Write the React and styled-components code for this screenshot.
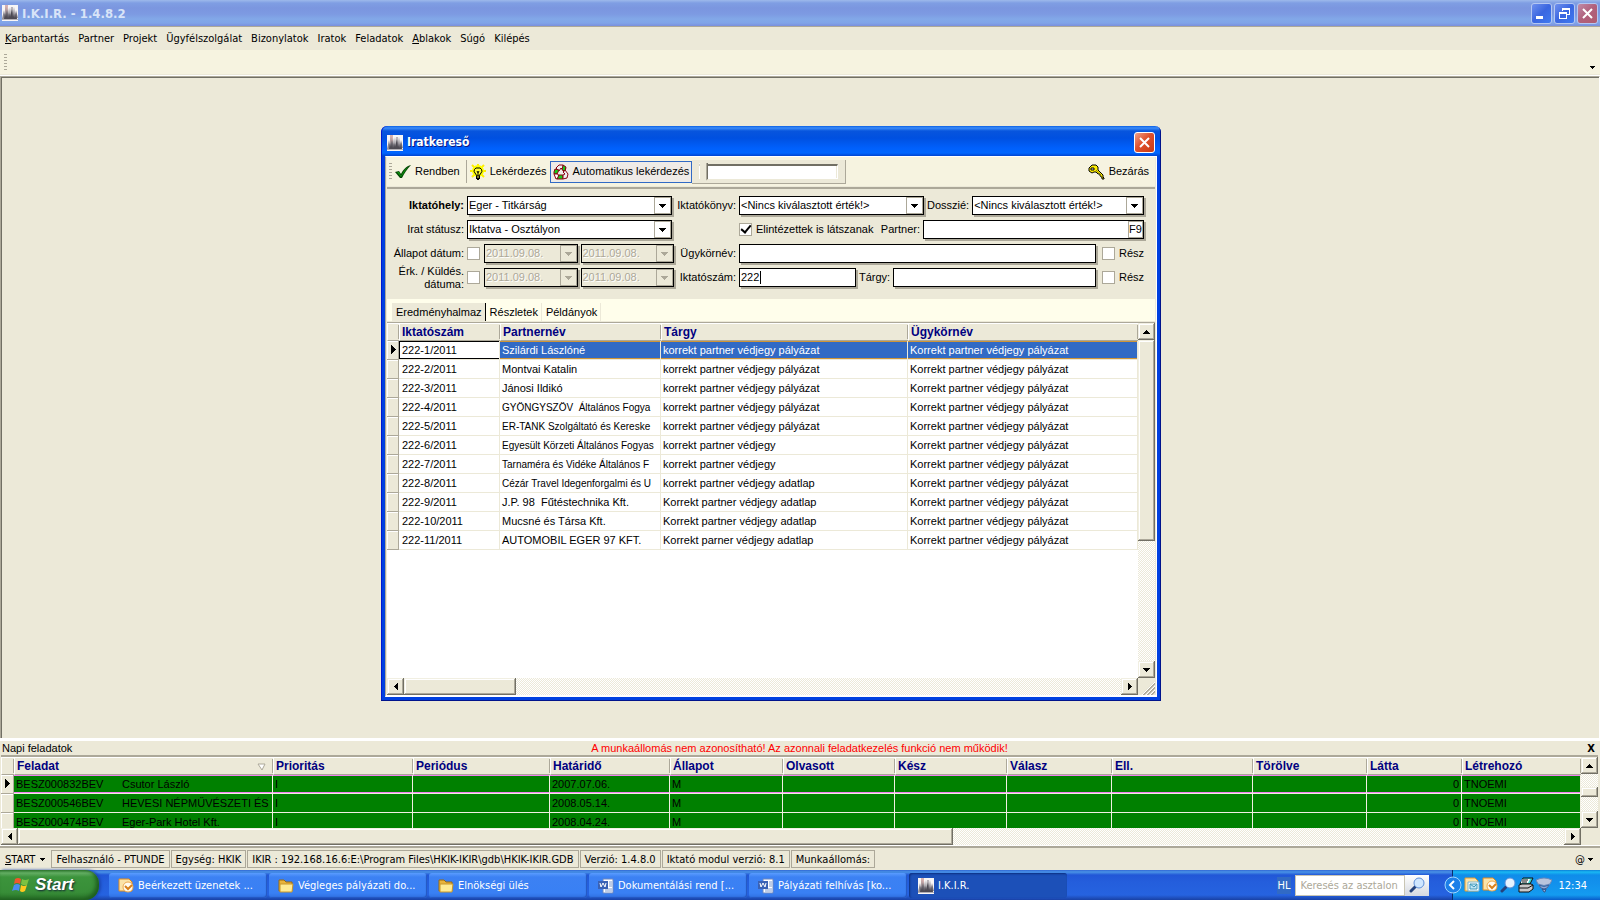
import React, { useState } from 'react';
import styled, { createGlobalStyle, css } from 'styled-components';

// Global Styles
const GlobalStyle = createGlobalStyle`
  * {
    box-sizing: border-box;
  }

  body {
    margin: 0;
    background: #ece9d8;
    color: #000;
    font-family: 'Liberation Sans', Arial, sans-serif;
    font-size: 11px;
    line-height: 13px;
    overflow: hidden;
  }

  button, input, select {
    font: inherit;
    color: inherit;
    margin: 0;
    padding: 0;
    border: none;
    border-radius: 0;
    background: none;
    outline: none;
  }
`;

const tahoma = css`
  font-family: 'DejaVu Sans Condensed', 'DejaVu Sans', sans-serif;
`;

const bevel = css`
  background: #ece9d8;
  box-shadow: inset -1px -1px #716f64, inset 1px 1px #f1efe2, inset -2px -2px #aca899, inset 2px 2px #fff;
`;

const Screen = styled.div`
  display: flex;
  flex-direction: column;
  height: 100vh;
`;

// Title bars
const TitleBar = styled.header`
  display: flex;
  align-items: center;
  gap: 4px;
  height: 26px;
  padding: 0 2px;
  flex: none;
  background: linear-gradient(#9db9eb 0, #7f9ee3 3px, #7b96df 8px, #7d9ae2 14px, #82a8e8 19px, #80a4e8 23px, #7a8fdd 26px);
`;

const MainTitle = styled.h1`
  ${tahoma}
  flex: 1;
  margin: 0;
  font-size: 13px;
  font-weight: bold;
  color: #d8e4f8;
`;

const WindowButton = styled.button`
  display: flex;
  width: 21px;
  height: 21px;
  align-items: center;
  justify-content: center;
  border: 1px solid ${(p) => (p.$dim ? '#b4c7f2' : '#fff')};
  border-radius: 3px;
  background: ${(p) => p.$fill};
`;

const CaptionButtons = styled.div`
  display: flex;
  gap: 2px;
`;

// Main menu
const MenuBar = styled.nav`
  ${tahoma}
  display: flex;
  align-items: center;
  gap: 9px;
  height: 24px;
  padding: 0 5px;
  flex: none;
  border-top: 1px solid #aca899;
`;

const MenuItem = styled.a`
  color: #000;
  text-decoration: none;
`;

const EmptyToolbar = styled.div`
  display: flex;
  align-items: center;
  justify-content: space-between;
  height: 26px;
  padding: 0 5px 0 4px;
  flex: none;
  background: #f6f3e0;
  border-bottom: 2px solid #ece9d8;
`;

const Grip = styled.span`
  width: 3px;
  height: 17px;
  background: repeating-linear-gradient(#aca899 0 1px, transparent 1px 3px);
`;

const ToolbarMore = styled.button`
  display: flex;
  align-self: flex-end;
  padding-bottom: 5px;
`;

const Workspace = styled.main`
  position: relative;
  flex: 1;
  border-top: 1px solid #aca899;
  border-left: 1px solid #aca899;
  border-right: 1px solid #fff;
  box-shadow: inset 1px 1px #716f64, 0 -1px #fff;
`;

// Search window
const Dialog = styled.section`
  position: absolute;
  left: 380px;
  top: 49px;
  display: flex;
  flex-direction: column;
  width: 780px;
  height: 575px;
  padding: 0 4px 4px;
  border-radius: 6px 6px 0 0;
  background: linear-gradient(#0a5fe6 0, #3c8cf8 2px, #0855dd 5px, #0050e0 12px, #0060fc 22px, #0066ff 27px, #0044d0 30px, #0040e0 31px);
  box-shadow: inset -1px -1px #00138c, inset 1px 0 #0019cf;
`;

const DialogTitle = styled.div`
  display: flex;
  align-items: center;
  gap: 4px;
  height: 30px;
  padding: 3px 2px 0;
  flex: none;
`;

const DialogName = styled.h2`
  ${tahoma}
  flex: 1;
  margin: 0;
  font-size: 12px;
  line-height: 15px;
  color: #fff;
  text-shadow: 1px 1px #0a1883;
`;

const DialogBody = styled.div`
  display: flex;
  flex-direction: column;
  flex: 1;
  min-height: 0;
  padding: 0 1px;
  background: #ece9d8;
  border: solid #fff;
  border-width: 1px 1px 2px;
  border-left-color: #aca899;
`;

const Toolbar = styled.div`
  display: flex;
  align-items: center;
  height: 29px;
  padding: 0 3px 0 2px;
  flex: none;
  background: #f6f3e0;
`;

const ToolButton = styled.button`
  display: flex;
  align-items: center;
  gap: 4px;
  height: 22px;
  padding: 0 2px;
  white-space: nowrap;
  border: 1px solid ${(p) => (p.$pressed ? '#316ac5' : 'transparent')};
  background: ${(p) => (p.$pressed ? '#efebe7' : 'none')};
`;

const Separator = styled.span`
  width: 1px;
  height: 23px;
  margin: 0 0 0 3px;
  background: #aca899;
`;

const SliderBox = styled.div`
  display: flex;
  align-items: center;
  height: 24px;
  padding: 0 7px;
  background: #ece9d8;
  border-right: 1px solid #aca899;
  border-bottom: 1px solid #aca899;
`;

const Slider = styled.input`
  appearance: none;
  width: 139px;
  height: 20px;

  &::-webkit-slider-runnable-track {
    height: 15px;
    background: #fff;
    border: 1px solid #fff;
    border-top: 2px solid #716f64;
    border-left: none;
    box-shadow: inset -1px 0 #ece9d8;
  }

  &::-webkit-slider-thumb {
    appearance: none;
    width: 9px;
    height: 20px;
    margin-top: -3px;
    background: linear-gradient(90deg, #fff 1px, #ece9d8 1px 7px, #aca899 7px 8px, #716f64 8px);
    clip-path: polygon(0 0, 100% 0, 100% 80%, 50% 100%, 0 80%);
  }
`;

const Spacer = styled.span`
  flex: 1;
`;

// Filter form
const FilterForm = styled.form`
  display: grid;
  grid-template-columns: 77px 207px 59px minmax(0, 1fr);
  grid-auto-rows: 19px;
  gap: 5px 3px;
  align-items: center;
  padding: 7px 11px 12px 0;
  flex: none;
  border-top: 2px solid #aca899;
  margin-top: 1px;
`;

const FieldLabel = styled.label`
  text-align: right;
  white-space: nowrap;
  font-weight: ${(p) => (p.$strong ? 'bold' : 'normal')};
`;

const TwoLineLabel = styled(FieldLabel)`
  white-space: normal;
`;

const FieldRow = styled.div`
  display: flex;
  align-items: center;
  gap: 3px;
`;

const Box = styled.span`
  position: relative;
  display: flex;
  flex: ${(p) => (p.$width ? 'none' : '1')};
  width: ${(p) => p.$width || 'auto'};
  min-width: 0;
  height: 19px;
  border: 1px solid #000;
  background: ${(p) => (p.$disabled ? '#ece9d8' : '#fff')};
  box-shadow: 2px 2px #aca899;
`;

const SelectInput = styled.select`
  appearance: none;
  flex: 1;
  min-width: 0;
  padding: 0 17px 1px 1px;
`;

const TextInput = styled.input`
  flex: 1;
  min-width: 0;
  padding: 0 1px 1px;

  &:disabled {
    color: #aca899;
    text-shadow: 1px 1px #fff;
  }
`;

const DropMark = styled.span`
  position: absolute;
  right: 0;
  top: 0;
  display: flex;
  align-items: center;
  justify-content: center;
  width: 17px;
  height: 17px;
  border: 1px solid #aca899;
  pointer-events: none;
`;

const KeyButton = styled.button`
  width: 15px;
  border: 1px solid #aca899;
`;

const Caret = styled.span`
  position: absolute;
  left: 20px;
  top: 2px;
  width: 1px;
  height: 13px;
  background: #000;
`;

const CheckWrap = styled.label`
  display: flex;
  align-items: center;
  gap: 3px;
  white-space: nowrap;
  margin-left: ${(p) => (p.$apart ? '3px' : '0')};
`;

const Check = styled.input`
  appearance: none;
  display: grid;
  place-items: center;
  width: 13px;
  height: 13px;
  margin: 0 1px 0 0;
  flex: none;
  background: #fff;
  border: 1px solid #aca899;

  &:checked::after {
    content: '';
    width: 4px;
    height: 8px;
    margin-top: -3px;
    border: solid #000;
    border-width: 0 2px 2px 0;
    transform: rotate(40deg);
  }
`;

// Tabs
const TabStrip = styled.div`
  display: flex;
  align-items: flex-end;
  height: 23px;
  padding: 0 5px;
  flex: none;
  background: #fffeeb;
  border-bottom: 1px solid #ece9d8;
`;

const Tab = styled.button`
  height: 18px;
  padding: 0 3px 0 4px;
  border-right: 1px solid ${(p) => (p.$active ? '#000' : '#ece9d8')};
  background: ${(p) => (p.$active ? '#ece9d8' : 'none')};
`;

// Data grids
const GridArea = styled.div`
  display: grid;
  grid-template-columns: 1fr 17px;
  grid-template-rows: ${(p) => p.$rows} 17px;
  flex: ${(p) => (p.$grow ? '1' : 'none')};
  min-height: 0;
  border-top: ${(p) => p.$line} solid #aca899;
`;

const GridView = styled.div`
  overflow: hidden;
  background: #fff;
`;

const Table = styled.table`
  width: 100%;
  table-layout: fixed;
  border-collapse: separate;
  border-spacing: 0;
`;

const Th = styled.th`
  height: 18px;
  padding: 1px 2px 0;
  text-align: left;
  font-size: 12px;
  color: #000080;
  white-space: nowrap;
  background: linear-gradient(#aca899, #aca899) right center / 1px 14px no-repeat, #ece9d8;
  border-bottom: 1px solid #aca899;
  border-top: 1px solid #fff;
  border-left: 1px solid #fff;
`;

const SortMark = styled.span`
  float: right;
  display: flex;
  padding: 3px 5px 0 0;
`;

const Indicator = styled.th`
  height: 19px;
  padding: 0 0 0 2px;
  background: #ece9d8;
  border: 1px solid #aca899;
  border-width: 0 1px 1px 0;
  box-shadow: inset 1px 1px #fff;
  line-height: 0;
`;

const Td = styled.td`
  height: 19px;
  padding: 0 0 0 2px;
  overflow: hidden;
  white-space: pre;
  font-size: ${(p) => (p.$long ? '10px' : '11px')};
  background: #fff;
  border: 1px solid #ece9d8;
  border-width: 0 1px 1px 0;

  tr[aria-selected='true'] > & {
    color: #fff;
    background: #316ac5;
    box-shadow: inset 0 1px #ce9539, inset 0 -1px #ce9539;
  }

  tr > &:nth-child(2) {
    padding-left: 3px;
  }

  tr[aria-selected='true'] > &:nth-child(2) {
    color: #000;
    background: #fff;
    box-shadow: inset 0 1px #000, inset 0 -1px #000, inset 1px 0 #000;
  }
`;

const TaskTd = styled.td`
  height: 19px;
  padding: 0 2px;
  overflow: hidden;
  white-space: pre;
  text-align: ${(p) => (p.$right ? 'right' : 'left')};
  background: #008000;
  border: 1px solid #f1efe2;
  border-width: 0 1px 1px 0;

  tr[aria-selected='true'] > & {
    box-shadow: inset 0 1px #f080f0, inset 0 -1px #f080f0;
  }
`;

const TaskCode = styled.span`
  display: inline-block;
  width: 106px;
`;

// Scroll bars
const Track = styled.div`
  display: flex;
  flex-direction: ${(p) => (p.$vertical ? 'column' : 'row')};
  background: conic-gradient(#fff 25%, #ece9d8 0 50%, #fff 0 75%, #ece9d8 0) 0 0 / 2px 2px;
`;

const ScrollButton = styled.button`
  ${bevel}
  display: flex;
  align-items: center;
  justify-content: center;
  width: 17px;
  height: 17px;
  flex: none;
`;

const Thumb = styled.div`
  ${bevel}
  flex: 0 0 ${(p) => p.$size};
  margin-top: ${(p) => p.$offset || '0'};
`;

const Corner = styled.div`
  display: flex;
  align-items: flex-end;
  justify-content: flex-end;
`;

// Daily tasks panel
const TaskPanel = styled.section`
  flex: none;
  padding: 0 2px 0 1px;
  border-top: 3px solid #fff;
  border-bottom: 1px solid #fff;
`;

const TaskCaption = styled.div`
  display: grid;
  grid-template-columns: 100px 1fr 100px;
  align-items: center;
  height: 14px;
  padding: 0 1px;
`;

const Warning = styled.span`
  text-align: center;
  color: #f00;
`;

const ClosePanel = styled.button`
  ${tahoma}
  justify-self: end;
  padding: 0 2px;
  font-weight: bold;
`;

// Status bar
const StatusBar = styled.footer`
  ${tahoma}
  display: flex;
  align-items: center;
  height: 24px;
  padding: 0 4px 0 5px;
  flex: none;
  border-top: 2px solid #aca899;
`;

const StatusMenu = styled.button`
  display: flex;
  align-items: center;
  gap: 5px;
  margin-right: 6px;
`;

const StatusCell = styled.span`
  padding: 2px 4px;
  height: 18px;
  margin-right: 1px;
  white-space: nowrap;
  border: 1px solid #aca899;
`;

// Taskbar
const Taskbar = styled.div`
  ${tahoma}
  display: flex;
  align-items: stretch;
  height: 30px;
  flex: none;
  color: #fff;
  background: linear-gradient(#3168d5 0, #4993e6 2px, #2157d7 5px, #245edc 12px, #2663e0 25px, #1941a5 30px);
`;

const StartButton = styled.button`
  display: flex;
  align-items: center;
  gap: 5px;
  width: 99px;
  padding: 0 0 1px 12px;
  margin-right: 10px;
  border-radius: 0 14px 14px 0;
  font: italic bold 17px 'Liberation Sans', Arial, sans-serif;
  text-shadow: 1px 1px 2px #123;
  background: linear-gradient(#2f7a2f 0, #63ad63 3px, #3c943c 7px, #388e38 22px, #2c7a2c 30px);
  box-shadow: inset -3px -2px 4px #1d5c1d, 2px 0 3px #1a45b0;
`;

const TaskButtons = styled.div`
  display: flex;
  gap: 2px;
  flex: 1;
`;

const TaskButton = styled.button`
  display: flex;
  align-items: center;
  gap: 4px;
  width: 158px;
  height: 25px;
  margin-top: 3px;
  padding-left: 9px;
  white-space: nowrap;
  border-radius: 3px;
  background: ${(p) => (p.$active ? '#1c50b8' : 'linear-gradient(#5a9cff 0, #3c81f3 4px, #3980f4 20px, #2f6fe0 25px)')};
  box-shadow: ${(p) => (p.$active ? 'inset 1px 1px 2px #0c2f80' : 'inset -1px -1px 1px #2456c0')};
`;

const Language = styled.span`
  align-self: center;
  padding: 2px 1px;
  margin-right: 4px;
  background: #316ac5;
`;

const DeskSearch = styled.form`
  display: flex;
  align-items: center;
  margin-right: 23px;
`;

const SearchInput = styled.input`
  width: 110px;
  height: 21px;
  padding: 0 4px;
  background: #fff;
  border: 1px solid #c9c5b4;

  &::placeholder {
    color: #aca899;
    opacity: 1;
  }
`;

const SearchButton = styled.button`
  display: flex;
  align-items: center;
  justify-content: center;
  width: 24px;
  height: 21px;
  background: linear-gradient(#fff, #d4d8e0);
`;

const Tray = styled.div`
  display: flex;
  align-items: center;
  gap: 2px;
  padding: 0 13px 0 11px;
  background: linear-gradient(#0c7ed8 0, #19b9f3 2px, #0f8dea 5px, #1290ec 12px, #149bf0 25px, #095bc9 30px);
  border-left: 1px solid #092e6c;
`;

const TrayToggle = styled.button`
  display: flex;
  margin-left: -20px;
`;

const Clock = styled.time`
  margin-left: 4px;
`;

// Icons
const triangles = {
  up: 'M3 0h1v1h1v1h1v1h1v1H0V3h1V2h1V1h1z',
  down: 'M0 0h7v1H6v1H5v1H4v1H3V3H2V2H1V1H0z',
  left: 'M4 0v7H3V6H2V5H1V4H0V3h1V2h1V1h1V0z',
  right: 'M0 0v7h1V6h1V5h1V4h1V3H3V2H2V1H1V0z',
};

const Triangle = ({ dir = 'down', color = '#000' }) => {
  const wide = dir === 'up' || dir === 'down';
  return (
    <svg width={wide ? 7 : 4} height={wide ? 4 : 7} shapeRendering="crispEdges" aria-hidden="true">
      <path d={triangles[dir]} fill={color} />
    </svg>
  );
};

const SmallArrow = () => (
  <svg width="5" height="3" shapeRendering="crispEdges" aria-hidden="true">
    <path d="M0 0h5v1H4v1H3v1H2V2H1V1H0z" />
  </svg>
);

const RowPointer = () => (
  <svg width="6" height="10" shapeRendering="crispEdges" aria-hidden="true">
    <path d="M0 0h1v1h1v1h1v1h1v1h1v1h-1v1h-1v1h-1v1h-1v1H0z" />
  </svg>
);

const AppIcon = () => (
  <svg width="16" height="16" viewBox="0 0 16 16" aria-hidden="true">
    <rect width="16" height="16" fill="#f8f6f6" />
    <path d="M3 0h3v10H3z" fill="#d9b2b0" />
    <path d="M9 2h2v8H9z" fill="#b9b4ba" />
    <path d="M0 14L2 5l1 5 1-9 1 8 1-6 1 7 1-8 1 9 1-6 1 4 1-7 1 8 1-5 2 8z" fill="#8a868e" />
    <path d="M2 14L3 8l1 4 1-7 1 8 1-5 1 4 2-8 1 8 1-3 1 4 1-6 1 7z" fill="#4d4a53" />
    <path d="M0 14h16v1H0z" fill="#b3b0b5" />
  </svg>
);

const CheckIcon = () => (
  <svg width="16" height="16" viewBox="0 0 16 16" aria-hidden="true">
    <path d="M0 8l4-1 2 3c2-4 5-8 10-9-4 4-7 9-9 13H5z" fill="#064806" />
    <path d="M2 8h2l2 4c2-4 4-7 7-9-3 4-5 7-7 10z" fill="#0f9a0f" />
  </svg>
);

const BulbIcon = () => (
  <svg width="16" height="16" viewBox="0 0 16 16" aria-hidden="true">
    <g stroke="#ffee00" strokeWidth="2">
      <path d="M8 0v3M0 7h4M12 7h4M2 1l3 3M14 1l-3 3M2 13l3-3M14 13l-3-3" />
    </g>
    <circle cx="8" cy="7" r="6" fill="#ffff00" />
    <path d="M8 4a3 3 0 0 0-3 5l2 3h2l2-3a3 3 0 0 0-3-5z" fill="#ffff30" stroke="#000" />
    <path d="M7 7l1 2 1-2M8 9v3" fill="none" stroke="#000" />
    <path d="M6 12h4v3H9v1H7v-1H6z" fill="#000" />
    <path d="M7 13h2" stroke="#ffff30" />
  </svg>
);

const RecycleIcon = () => (
  <svg width="16" height="16" viewBox="0 0 16 16" aria-hidden="true">
    <g stroke="#8b0010" strokeWidth="1">
      <path d="M3 4l3-3h4l3 4-3 1-2-2-2 3z" fill="#eee" />
      <path d="M2 5l4 1-2 4H1v-2z" fill="#19c819" />
      <path d="M1 10h4l1 4-3 1z" fill="#fff" />
      <path d="M6 11h4v4H4z" fill="#19c819" />
      <path d="M12 6l3 4-1 4-4 1v-4l2-1-2-2z" fill="#eee" />
      <path d="M10 1l3 2-1 4-3-1z" fill="#19c819" />
    </g>
  </svg>
);

const KeyIcon = () => (
  <svg width="17" height="16" viewBox="0 0 17 16" aria-hidden="true">
    <path
      d="M4 1h4l2 2v3l5 5v2l1 1v1h-2v-2h-1v-1h-1v-2h-2L8 8H6L4 9 1 7V4z"
      fill="#ffee00"
      stroke="#000"
      strokeLinejoin="round"
    />
    <path d="M3 4h3v2H3z" fill="#f6f3e0" stroke="#000" />
    <path d="M8 6l6 7" stroke="#8a8000" />
  </svg>
);

const CloseGlyph = () => (
  <svg width="11" height="11" viewBox="0 0 11 11" aria-hidden="true">
    <path d="M1 1l9 9M10 1l-9 9" stroke="#fff" strokeWidth="2" />
  </svg>
);

const FlagIcon = () => (
  <svg width="18" height="18" viewBox="0 0 18 18" aria-hidden="true">
    <path d="M3 3q3-2 6 0L8 8Q5 6 2 8z" fill="#f0562c" />
    <path d="M10 3q3 2 7 0l-2 6q-3 1-6-1z" fill="#7cc242" />
    <path d="M2 9q3-2 6 0l-1 6q-3-2-7 0z" fill="#4a8cf0" />
    <path d="M9 9q3 2 6 0l-2 6q-3 2-5 0z" fill="#ffc81e" />
  </svg>
);

const MailIcon = () => (
  <svg width="16" height="16" viewBox="0 0 16 16" aria-hidden="true">
    <path d="M1 1h10l3 3v9H1z" fill="#fbe3a8" stroke="#e08a1c" />
    <circle cx="10" cy="9" r="5" fill="#fffbf0" stroke="#eda94c" />
    <path d="M7 8l3 3 4-4" fill="none" stroke="#d8801c" strokeWidth="2" />
  </svg>
);

const FolderIcon = () => (
  <svg width="16" height="14" viewBox="0 0 16 14" aria-hidden="true">
    <path d="M1 3V1h5l2 2h6v9H1z" fill="#e8b33c" stroke="#9b6a10" />
    <path d="M2 5h13l-1 8H2z" fill="#ffeb94" stroke="#c8962a" />
  </svg>
);

const WordIcon = () => (
  <svg width="16" height="16" viewBox="0 0 16 16" aria-hidden="true">
    <path d="M5 1h10v14H5z" fill="#fff" stroke="#6a86c0" />
    <path d="M11 4h3M11 6h3M11 8h3M7 11h7M7 13h7" stroke="#7d9ad0" />
    <path d="M0 3h10v8H0z" fill="#3a62b4" />
    <path d="M2 5l1 4 2-4 2 4 1-4" fill="none" stroke="#fff" />
  </svg>
);

const Magnifier = ({ lens = '#cfe6ff' }) => (
  <svg width="16" height="16" viewBox="0 0 16 16" aria-hidden="true">
    <path d="M2 14l5-5" stroke="#24427c" strokeWidth="3" strokeLinecap="round" />
    <circle cx="10" cy="6" r="5" fill={lens} stroke="#5f8fd8" />
  </svg>
);

const MessageIcon = () => (
  <svg width="16" height="16" viewBox="0 0 16 16" aria-hidden="true">
    <path d="M1 1h10l3 3v10H1z" fill="#fbe3a8" stroke="#e39a2c" />
    <path d="M4 5h11v9H4z" fill="#fff" stroke="#7db8d0" />
    <path d="M6 7h7v5H6z" fill="#bfe6f6" stroke="#3f97b8" />
    <path d="M6 7l4 3 3-3" fill="none" stroke="#3f97b8" />
  </svg>
);

const PrinterIcon = () => (
  <svg width="16" height="16" viewBox="0 0 16 16" aria-hidden="true">
    <path d="M5 1h10l-3 6H2z" fill="#3fd8d0" stroke="#111" />
    <path d="M4 2h8l-2 4H3z" fill="#fff" />
    <path d="M1 8l3-1h9l2 1v4l-4 3H1z" fill="#c8c8c8" stroke="#111" />
    <path d="M1 11h9l5-3M4 3h6M4 5h5" fill="none" stroke="#111" />
  </svg>
);

const FunnelIcon = () => (
  <svg width="16" height="16" viewBox="0 0 16 16" aria-hidden="true">
    <path d="M0 3q8-4 16 0l-2 4q-6 3-12 0z" fill="#b8c4dc" stroke="#6888bc" />
    <path d="M3 8q5 3 10 0l-2 3q-3 2-6 0z" fill="#8fa8d4" stroke="#44649c" />
    <path d="M6 12q2 1 4 0l-1 3H8z" fill="#8fb0e0" stroke="#35568c" />
  </svg>
);

const ChevronBall = () => (
  <svg width="18" height="18" viewBox="0 0 18 18" aria-hidden="true">
    <circle cx="9" cy="9" r="8" fill="#1c7fe8" stroke="#9fd6ff" />
    <path d="M10 5L6 9l4 4" fill="none" stroke="#fff" strokeWidth="2" />
  </svg>
);

const SizeGrip = () => (
  <svg width="14" height="14" viewBox="0 0 14 14" aria-hidden="true">
    <path d="M2 14L14 2M6 14l8-8M10 14l4-4" stroke="#aca899" strokeWidth="2" />
    <path d="M1 14L14 1M5 14l9-9M9 14l5-5" stroke="#fff" />
  </svg>
);

const documents = [
  ['222-1/2011', 'Szilárdi Lászlóné', 'korrekt partner védjegy pályázat'],
  ['222-2/2011', 'Montvai Katalin', 'korrekt partner védjegy pályázat'],
  ['222-3/2011', 'Jánosi Ildikó', 'korrekt partner védjegy pályázat'],
  ['222-4/2011', 'GYÖNGYSZÖV  Általános Fogya', 'korrekt partner védjegy pályázat'],
  ['222-5/2011', 'ER-TANK Szolgáltató és Kereske', 'korrekt partner védjegy pályázat'],
  ['222-6/2011', 'Egyesült Körzeti Általános Fogyas', 'korrekt partner védjegy'],
  ['222-7/2011', 'Tarnaméra és Vidéke Általános F', 'korrekt partner védjegy'],
  ['222-8/2011', 'Cézár Travel Idegenforgalmi és U', 'korrekt partner védjegy adatlap'],
  ['222-9/2011', 'J.P. 98  Fűtéstechnika Kft.', 'Korrekt partner védjegy adatlap'],
  ['222-10/2011', 'Mucsné és Társa Kft.', 'Korrekt partner védjegy adatlap'],
  ['222-11/2011', 'AUTOMOBIL EGER 97 KFT.', 'Korrekt parner védjegy adatlap'],
];

const taskColumns = [
  ['Feladat', 259],
  ['Prioritás', 140],
  ['Periódus', 137],
  ['Határidő', 120],
  ['Állapot', 113],
  ['Olvasott', 112],
  ['Kész', 112],
  ['Válasz', 105],
  ['Ell.', 141],
  ['Törölve', 114],
  ['Látta', 95],
  ['Létrehozó'],
];

const tasks = [
  ['BESZ000832BEV', 'Csutor László', '2007.07.06.'],
  ['BESZ000546BEV', 'HEVESI NÉPMŰVÉSZETI ÉS', '2008.05.14.'],
  ['BESZ000474BEV', 'Eger-Park Hotel Kft.', '2008.04.24.'],
];

const Combo = ({ id, value, width }) => (
  <Box $width={width}>
    <SelectInput id={id} defaultValue={value}>
      <option>{value}</option>
    </SelectInput>
    <DropMark>
      <Triangle />
    </DropMark>
  </Box>
);

const DateField = ({ label }) => (
  <Box $disabled>
    <TextInput aria-label={label} defaultValue="2011.09.08." disabled />
    <DropMark>
      <Triangle color="#aca899" />
    </DropMark>
  </Box>
);

const VScroll = ({ size, offset }) => (
  <Track $vertical>
    <ScrollButton aria-label="Fel"><Triangle dir="up" /></ScrollButton>
    <Thumb $size={size} $offset={offset} />
    <Spacer />
    <ScrollButton aria-label="Le"><Triangle dir="down" /></ScrollButton>
  </Track>
);

const HScroll = ({ size }) => (
  <Track>
    <ScrollButton aria-label="Balra"><Triangle dir="left" /></ScrollButton>
    <Thumb $size={size} />
    <Spacer />
    <ScrollButton aria-label="Jobbra"><Triangle dir="right" /></ScrollButton>
  </Track>
);

const SearchDialog = () => {
  const [tab, setTab] = useState('Eredményhalmaz');

  return (
    <Dialog>
      <DialogTitle>
        <AppIcon />
        <DialogName>Iratkereső</DialogName>
        <WindowButton aria-label="Bezárás" $fill="linear-gradient(135deg, #f0a088, #e0512c 45%, #c83a14)">
          <CloseGlyph />
        </WindowButton>
      </DialogTitle>

      <DialogBody>
        {/* Toolbar */}
        <Toolbar>
          <Grip />
          <ToolButton><CheckIcon />Rendben</ToolButton>
          <Separator />
          <ToolButton><BulbIcon />Lekérdezés</ToolButton>
          <ToolButton $pressed aria-pressed="true"><RecycleIcon />Automatikus lekérdezés</ToolButton>
          <SliderBox>
            <Slider type="range" defaultValue="0" aria-label="Késleltetés" />
          </SliderBox>
          <Spacer />
          <ToolButton><KeyIcon />Bezárás</ToolButton>
        </Toolbar>

        {/* Filters */}
        <FilterForm onSubmit={(e) => e.preventDefault()}>
          <FieldLabel htmlFor="place" $strong>Iktatóhely:</FieldLabel>
          <FieldRow><Combo id="place" value="Eger - Titkárság" width="205px" /></FieldRow>
          <FieldLabel htmlFor="book">Iktatókönyv:</FieldLabel>
          <FieldRow>
            <Combo id="book" value="<Nincs kiválasztott érték!>" width="185px" />
            <FieldLabel htmlFor="dossier">Dosszié:</FieldLabel>
            <Combo id="dossier" value="<Nincs kiválasztott érték!>" />
          </FieldRow>

          <FieldLabel htmlFor="status">Irat státusz:</FieldLabel>
          <FieldRow><Combo id="status" value="Iktatva - Osztályon" width="205px" /></FieldRow>
          <span />
          <FieldRow>
            <CheckWrap><Check type="checkbox" defaultChecked />Elintézettek is látszanak</CheckWrap>
            <Spacer />
            <FieldLabel htmlFor="partner">Partner:</FieldLabel>
            <Box $width="221px">
              <TextInput id="partner" />
              <KeyButton type="button">F9</KeyButton>
            </Box>
          </FieldRow>

          <FieldLabel htmlFor="stateDate">Állapot dátum:</FieldLabel>
          <FieldRow>
            <Check type="checkbox" id="stateDate" />
            <DateField label="Állapot dátum kezdete" />
            <DateField label="Állapot dátum vége" />
          </FieldRow>
          <FieldLabel htmlFor="topic">Ügykörnév:</FieldLabel>
          <FieldRow>
            <Box><TextInput id="topic" /></Box>
            <CheckWrap $apart><Check type="checkbox" />Rész</CheckWrap>
          </FieldRow>

          <TwoLineLabel htmlFor="sentDate">Érk. / Küldés. dátuma:</TwoLineLabel>
          <FieldRow>
            <Check type="checkbox" id="sentDate" />
            <DateField label="Érkezés dátuma" />
            <DateField label="Küldés dátuma" />
          </FieldRow>
          <FieldLabel htmlFor="number">Iktatószám:</FieldLabel>
          <FieldRow>
            <Box $width="117px">
              <TextInput id="number" defaultValue="222" />
              <Caret />
            </Box>
            <FieldLabel htmlFor="subject">Tárgy:</FieldLabel>
            <Box><TextInput id="subject" /></Box>
            <CheckWrap $apart><Check type="checkbox" />Rész</CheckWrap>
          </FieldRow>
        </FilterForm>

        {/* Results */}
        <TabStrip role="tablist">
          {['Eredményhalmaz', 'Részletek', 'Példányok'].map((name) => (
            <Tab key={name} role="tab" aria-selected={tab === name} $active={tab === name} onClick={() => setTab(name)}>
              {name}
            </Tab>
          ))}
        </TabStrip>
        <GridArea $rows="1fr" $line="1px" $grow>
          <GridView>
            <Table>
              <colgroup>
                <col width="12" />
                <col width="101" />
                <col width="161" />
                <col width="247" />
                <col />
              </colgroup>
              <thead>
                <tr>
                  <Th />
                  <Th>Iktatószám</Th>
                  <Th>Partnernév</Th>
                  <Th>Tárgy</Th>
                  <Th>Ügykörnév</Th>
                </tr>
              </thead>
              <tbody>
                {documents.map(([number, partner, subject], i) => (
                  <tr key={number} aria-selected={i === 0}>
                    <Indicator>{i === 0 && <RowPointer />}</Indicator>
                    <Td>{number}</Td>
                    <Td $long={partner.length > 26 && !partner.endsWith('.')}>{partner}</Td>
                    <Td>{subject}</Td>
                    <Td>Korrekt partner védjegy pályázat</Td>
                  </tr>
                ))}
              </tbody>
            </Table>
          </GridView>
          <VScroll size="201px" />
          <HScroll size="112px" />
          <Corner><SizeGrip /></Corner>
        </GridArea>
      </DialogBody>
    </Dialog>
  );
};

const App = () => (
  <>
    <GlobalStyle />
    <Screen>
      <TitleBar>
        <AppIcon />
        <MainTitle>I.K.I.R. - 1.4.8.2</MainTitle>
        <CaptionButtons>
          <WindowButton $dim aria-label="Kis méret" $fill="linear-gradient(135deg, #6f90ee, #3a66e0 50%, #3f7af0)">
            <svg width="11" height="11"><path d="M0 8h7v3H0z" fill="#fff" /></svg>
          </WindowButton>
          <WindowButton $dim aria-label="Előző méret" $fill="linear-gradient(135deg, #6f90ee, #3a66e0 50%, #3f7af0)">
            <svg width="11" height="11" shapeRendering="crispEdges">
              <path d="M3 0h8v7H8V6h2V2H4v1H3zM0 4h8v7H0zm1 2v4h6V6z" fill="#fff" fillRule="evenodd" />
            </svg>
          </WindowButton>
          <WindowButton $dim aria-label="Kilépés" $fill="linear-gradient(135deg, #c08ca8, #b0607c 50%, #b05c70)">
            <CloseGlyph />
          </WindowButton>
        </CaptionButtons>
      </TitleBar>

      <MenuBar>
        <MenuItem href="#karbantartas"><u>K</u>arbantartás</MenuItem>
        <MenuItem href="#partner">Partner</MenuItem>
        <MenuItem href="#projekt">Projekt</MenuItem>
        <MenuItem href="#ugyfelszolgalat">Ügyfélszolgálat</MenuItem>
        <MenuItem href="#bizonylatok">Bizonylatok</MenuItem>
        <MenuItem href="#iratok">Iratok</MenuItem>
        <MenuItem href="#feladatok">Feladatok</MenuItem>
        <MenuItem href="#ablakok"><u>A</u>blakok</MenuItem>
        <MenuItem href="#sugo">Sú<u>g</u>ó</MenuItem>
        <MenuItem href="#kilepes">Kilépés</MenuItem>
      </MenuBar>
      <EmptyToolbar>
        <Grip />
        <ToolbarMore aria-label="Több"><SmallArrow /></ToolbarMore>
      </EmptyToolbar>

      <Workspace>
        <SearchDialog />
      </Workspace>

      {/* Daily tasks */}
      <TaskPanel>
        <TaskCaption>
          <span>Napi feladatok</span>
          <Warning>A munkaállomás nem azonosítható! Az azonnali feladatkezelés funkció nem működik!</Warning>
          <ClosePanel>X</ClosePanel>
        </TaskCaption>
        <GridArea $rows="71px" $line="2px">
          <GridView>
            <Table>
              <colgroup>
                <col width="13" />
                {taskColumns.map(([name, width]) => <col key={name} width={width} />)}
              </colgroup>
              <thead>
                <tr>
                  <Th />
                  {taskColumns.map(([name]) => (
                    <Th key={name}>
                      {name}
                      {name === 'Feladat' && (
                        <SortMark>
                          <svg width="9" height="8"><path d="M1 1h7L5 7z" fill="#fff" stroke="#aca899" /></svg>
                        </SortMark>
                      )}
                    </Th>
                  ))}
                </tr>
              </thead>
              <tbody>
                {tasks.map(([code, name, due], i) => (
                  <tr key={code} aria-selected={i === 0}>
                    <Indicator>{i === 0 && <RowPointer />}</Indicator>
                    <TaskTd><TaskCode>{code}</TaskCode>{name}</TaskTd>
                    <TaskTd>I</TaskTd>
                    <TaskTd />
                    <TaskTd>{due}</TaskTd>
                    <TaskTd>M</TaskTd>
                    <TaskTd />
                    <TaskTd />
                    <TaskTd />
                    <TaskTd />
                    <TaskTd />
                    <TaskTd $right>0</TaskTd>
                    <TaskTd>TNOEMI</TaskTd>
                  </tr>
                ))}
              </tbody>
            </Table>
          </GridView>
          <VScroll size="10px" offset="13px" />
          <HScroll size="935px" />
          <Corner />
        </GridArea>
      </TaskPanel>

      <StatusBar>
        <StatusMenu><span><u>S</u>TART</span><SmallArrow /></StatusMenu>
        <StatusCell>Felhasználó - PTUNDE</StatusCell>
        <StatusCell>Egység: HKIK</StatusCell>
        <StatusCell>IKIR : 192.168.16.6:E:\Program Files\HKIK-IKIR\gdb\HKIK-IKIR.GDB</StatusCell>
        <StatusCell>Verzió: 1.4.8.0</StatusCell>
        <StatusCell>Iktató modul verzió: 8.1</StatusCell>
        <StatusCell>Munkaállomás:</StatusCell>
        <Spacer />
        <span>@</span>
        <ToolButton aria-label="Több"><SmallArrow /></ToolButton>
      </StatusBar>

      <Taskbar>
        <StartButton><FlagIcon />Start</StartButton>
        <TaskButtons>
          <TaskButton><MailIcon />Beérkezett üzenetek ...</TaskButton>
          <TaskButton><FolderIcon />Végleges pályázati do...</TaskButton>
          <TaskButton><FolderIcon />Elnökségi ülés</TaskButton>
          <TaskButton><WordIcon />Dokumentálási rend [...</TaskButton>
          <TaskButton><WordIcon />Pályázati felhívás [ko...</TaskButton>
          <TaskButton $active><AppIcon />I.K.I.R.</TaskButton>
        </TaskButtons>
        <Language>HL</Language>
        <DeskSearch onSubmit={(e) => e.preventDefault()}>
          <SearchInput placeholder="Keresés az asztalon" aria-label="Keresés az asztalon" />
          <SearchButton aria-label="Keresés"><Magnifier /></SearchButton>
        </DeskSearch>
        <Tray>
          <TrayToggle aria-label="Rejtett ikonok"><ChevronBall /></TrayToggle>
          <MessageIcon />
          <MailIcon />
          <Magnifier lens="#e4f2ff" />
          <PrinterIcon />
          <FunnelIcon />
          <Clock>12:34</Clock>
        </Tray>
      </Taskbar>
    </Screen>
  </>
);

export default App;
